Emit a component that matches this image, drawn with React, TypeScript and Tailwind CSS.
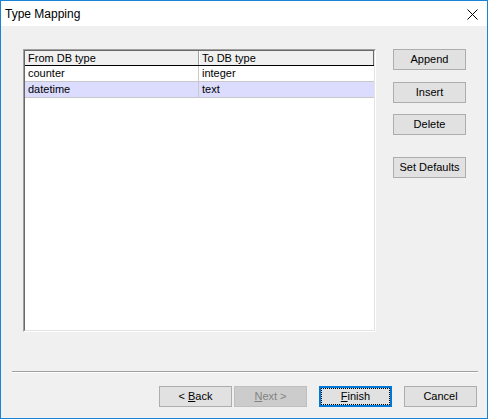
import React from "react";

const font = { fontFamily: '"Liberation Sans", Arial, sans-serif' };

function Btn({ children, className = "" }: { children: React.ReactNode; className?: string }) {
  return (
    <div
      className={`w-[73px] h-[21px] bg-[#e1e1e1] border border-[#adadad] flex items-center justify-center text-[11px] text-black leading-none ${className}`}
    >
      {children}
    </div>
  );
}

export default function App() {
  const rows = [
    { from: "counter", to: "integer", sel: false },
    { from: "datetime", to: "text", sel: true },
  ];
  return (
    <div className="w-[488px] h-[419px] border border-[#1883d7] bg-[#f0f0f0] flex flex-col" style={font}>
      <div className="h-[25px] bg-white flex items-center justify-between pl-[4px] pr-[9px] shrink-0">
        <span className="text-[12px] text-black leading-none">Type Mapping</span>
        <svg width="11" height="11" viewBox="0 0 11 11" className="mt-[1px]">
          <path d="M0.5 0.5 L10.5 10.5 M10.5 0.5 L0.5 10.5" stroke="#000" strokeWidth="1" fill="none" />
        </svg>
      </div>
      <div className="flex pl-[22px] pt-[23px]">
        <div className="w-[353px] h-[283px] border-l border-t border-[#a0a0a0] border-r-white border-b-white border-r border-b">
          <div className="w-full h-full border-l border-t border-[#696969] border-r border-b border-r-[#e3e3e3] border-b-[#e3e3e3] bg-white flex flex-col">
            <div className="flex h-[15px] bg-[#f0f0f0] border-b border-black text-[11px] leading-none text-black">
              <div className="w-[174px] border-r border-[#a0a0a0] flex items-center pl-[3px]">From DB type</div>
              <div className="flex-1 border-r border-[#696969] border-l border-l-white flex items-center pl-[2px]">To DB type</div>
            </div>
            {rows.map((r) => (
              <div
                key={r.from}
                className={`flex h-[16px] border-b border-[#c8c8c8] text-[11px] leading-none text-black ${r.sel ? "bg-[#dcdcff]" : "bg-white"}`}
              >
                <div className="w-[174px] border-r border-[#c8c8c8] flex items-center pl-[3px]">{r.from}</div>
                <div className="flex-1 flex items-center pl-[3px]">{r.to}</div>
              </div>
            ))}
          </div>
        </div>
        <div className="ml-[17px] flex flex-col">
          <Btn>Append</Btn>
          <Btn className="mt-[12px]">Insert</Btn>
          <Btn className="mt-[11px]">Delete</Btn>
          <Btn className="mt-[22px]">Set Defaults</Btn>
        </div>
      </div>
      <div className="ml-[11px] w-[466px] mt-[39px] h-[2px] border-t border-[#a0a0a0] border-b border-b-white" />
      <div className="flex justify-end pr-[10px] mt-[13px]">
        <Btn>
          &lt;&nbsp;<span className="underline">B</span>ack
        </Btn>
        <div className="ml-[2px] w-[73px] h-[21px] bg-[#cccccc] border border-[#bfbfbf] flex items-center justify-center text-[11px] text-[#838383] leading-none">
          <span className="underline">N</span>ext &gt;
        </div>
        <div className="ml-[12px] w-[73px] h-[21px] bg-[#e1e1e1] border-2 border-[#0078d7] flex">
          <div className="flex-1 border border-dotted border-black flex items-center justify-center text-[11px] text-black leading-none">
            <span className="underline">F</span>inish
          </div>
        </div>
        <Btn className="ml-[12px]">Cancel</Btn>
      </div>
    </div>
  );
}
